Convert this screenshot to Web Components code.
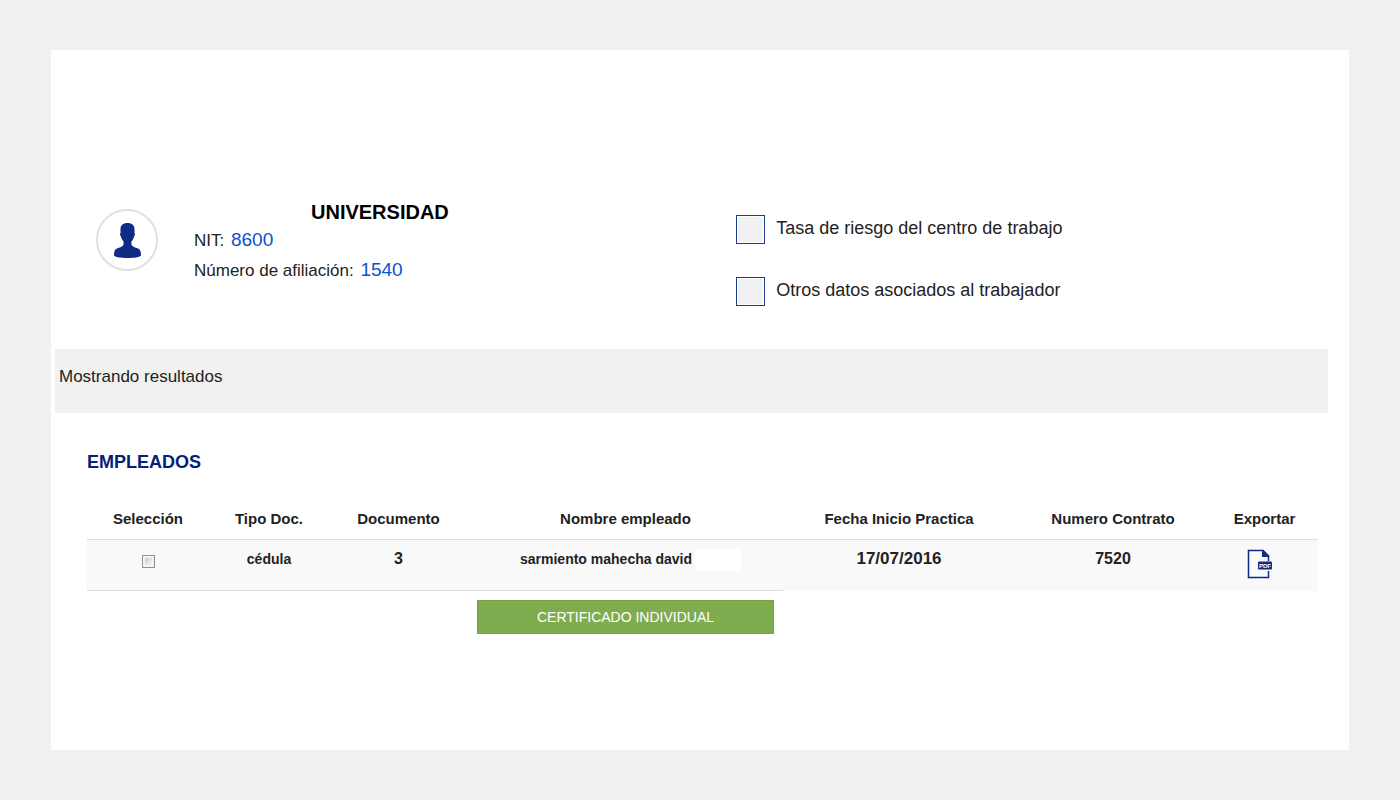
<!DOCTYPE html>
<html lang="es">
<head>
<meta charset="utf-8">
<meta name="viewport" content="width=device-width, initial-scale=1">
<title>Empleados</title>
<style>
  body {
    margin: 0;
    background: #f1f1f1;
    color: #222;
    font-family: "Liberation Sans", Arial, sans-serif;
  }
</style>
</head>
<body>

<employee-page>
  <company-info slot="company" name="UNIVERSIDAD" nit="8600" affiliation="1540"></company-info>
  <check-option slot="options">Tasa de riesgo del centro de trabajo</check-option>
  <check-option slot="options">Otros datos asociados al trabajador</check-option>
  <results-bar slot="results">Mostrando resultados</results-bar>
  <employee-table slot="table"></employee-table>
</employee-page>

<template id="employee-page-template">
  <style>
    :host {
      display: block;
      margin: 50px 51px;
      min-height: calc(100vh - 100px);
      background: #fff;
    }

    header {
      display: grid;
      grid-template-columns: 53% 1fr;
      padding: 149px 45px 43px;
    }

    .options {
      display: flex;
      flex-direction: column;
      gap: 33px;
      padding-top: 16px;
    }
  </style>

  <header>
    <slot name="company"></slot>
    <div class="options"><slot name="options"></slot></div>
  </header>
  <slot name="results"></slot>
  <slot name="table"></slot>
</template>

<template id="company-info-template">
  <style>
    :host {
      display: flex;
      gap: 36px;
    }

    user-avatar {
      margin-top: 10px;
    }

    h1 {
      margin: 0;
      padding-left: 117px;
      color: #000;
      font-size: 20px;
      line-height: 27px;
    }

    p {
      margin: 0;
      font-size: 17px;
      line-height: 30px;
    }

    span {
      margin-left: 2px;
      color: #0b50d0;
      font-size: 19px;
      line-height: 20px;
    }
  </style>

  <user-avatar></user-avatar>
  <div>
    <h1></h1>
    <p>NIT: <span class="nit"></span></p>
    <p>Número de afiliación: <span class="affiliation"></span></p>
  </div>
</template>

<template id="user-avatar-template">
  <style>
    :host {
      display: flex;
      align-items: center;
      justify-content: center;
      box-sizing: border-box;
      width: 62px;
      height: 62px;
      flex: none;
      border: 2px solid #e0e0e0;
      border-radius: 50%;
    }
  </style>

  <svg width="27" height="35" viewBox="0 0 27 35" fill="#0d2c84" aria-hidden="true">
    <path d="M13.500 0C9.200 0 6.500 2.200 6.500 6V10C5.800 10.300 6 12.800 6.900 13.300C7.300 15.500 8.300 17.300 9.600 18.600V21.200C9 23.800 5.500 24.300 2.500 25.800C.8 26.700 0 28.500 0 32.500C1.500 34.300 7 35 13.500 35S25.500 34.300 27 32.500C27 28.500 26.200 26.700 24.500 25.800C21.500 24.300 18 23.800 17.400 21.200V18.600C18.700 17.300 19.700 15.500 20.100 13.300C21 12.800 21.200 10.300 20.500 10V6C20.500 2.200 17.800 0 13.500 0Z"/>
  </svg>
</template>

<template id="check-option-template">
  <style>
    :host {
      display: block;
    }

    label {
      display: flex;
      gap: 11px;
      font-size: 18px;
      line-height: 26px;
    }

    input {
      appearance: none;
      flex: none;
      width: 29px;
      height: 29px;
      margin: 0;
      border: 1px solid #1c3c8c;
      background: #f1f1f1;
      box-shadow: inset 0 0 0 1px #fff;
    }

    input:checked {
      background: #0d2c84;
    }
  </style>

  <label><input type="checkbox"><span><slot></slot></span></label>
</template>

<template id="results-bar-template">
  <style>
    :host {
      display: block;
      box-sizing: border-box;
      min-height: 64px;
      margin: 0 21px 0 4px;
      padding: 16px 4px;
      background: #f1f1f1;
      font-size: 17px;
      line-height: 24px;
    }
  </style>

  <slot></slot>
</template>

<template id="employee-table-template">
  <style>
    :host {
      display: block;
      padding: 36px 31px 36px 36px;
    }

    h2 {
      margin: 0 0 25px;
      color: #04207a;
      font-size: 18px;
      line-height: 26px;
    }

    table {
      width: 100%;
      table-layout: fixed;
      border-collapse: separate;
      border-spacing: 0;
      font-size: 15px;
      font-weight: bold;
      line-height: 20px;
      text-align: center;
    }

    th {
      padding: 9px 0 10px;
      border-bottom: 1px solid #ddd;
    }

    td {
      padding: 0;
    }

    tbody td {
      height: 42px;
      padding-top: 9px;
      background: #f9f9f9;
      vertical-align: top;
    }

    tbody td:nth-child(-n+4) {
      height: 41px;
      border-bottom: 1px solid #ddd;
    }

    .type, .name {
      font-size: 14px;
    }

    .name {
      padding-left: 10px;
    }

    .date {
      font-size: 17px;
    }

    .number {
      font-size: 16px;
    }

    .file {
      padding-right: 10px;
    }

    .blank {
      display: inline-block;
      width: 46px;
      height: 22px;
      margin-left: 3px;
      background: #fff;
      vertical-align: top;
    }

    input {
      appearance: none;
      width: 13px;
      height: 13px;
      margin: 6px 0 0;
      border: 1px solid #8e8f8f;
      background: linear-gradient(135deg, #b9bdc2, #f4f4f4 75%);
      box-shadow: inset 0 0 0 2px #f4f4f4;
      vertical-align: top;
    }

    input:checked {
      background: #0d2c84;
    }

    .export {
      padding: 0;
      border: 0;
      background: none;
      cursor: pointer;
      vertical-align: top;
    }

    svg {
      display: block;
    }

    tfoot td {
      padding: 9px;
    }

    .certificate {
      display: block;
      width: 100%;
      padding: 5px;
      border: 1px solid #73a53e;
      background: #7fac4e;
      color: #fff;
      font: 14px/22px "Liberation Sans", Arial, sans-serif;
      cursor: pointer;
    }
  </style>

  <h2>EMPLEADOS</h2>
  <table>
    <colgroup>
      <col style="width: 122px">
      <col style="width: 120px">
      <col style="width: 139px">
      <col style="width: 315px">
      <col style="width: 232px">
      <col style="width: 196px">
      <col style="width: 107px">
    </colgroup>
    <thead>
      <tr>
        <th>Selección</th>
        <th>Tipo Doc.</th>
        <th>Documento</th>
        <th>Nombre empleado</th>
        <th>Fecha Inicio Practica</th>
        <th>Numero Contrato</th>
        <th>Exportar</th>
      </tr>
    </thead>
    <tbody>
      <tr>
        <td><input type="checkbox" aria-label="Selección"></td>
        <td class="type">cédula</td>
        <td class="number">3</td>
        <td class="name">sarmiento mahecha david<span class="blank"></span></td>
        <td class="date">17/07/2016</td>
        <td class="number">7520</td>
        <td class="file">
          <button class="export" type="button" aria-label="Exportar">
            <svg width="26" height="30" viewBox="0 0 26 30">
              <path d="M16 1.500H1.500V28.500H21.500V22M21.500 12V7" fill="none" stroke="#0d2c84" stroke-width="1.500"/>
              <path d="M15 .8H16.500L22.200 6.500V8H15Z" fill="#0d2c84"/>
              <rect x="11" y="12.500" width="14" height="8" rx="1" fill="#0d2c84"/>
              <text x="18" y="18.500" fill="#fff" font-size="6" font-weight="bold" text-anchor="middle">PDF</text>
            </svg>
          </button>
        </td>
      </tr>
    </tbody>
    <tfoot>
      <tr>
        <td colspan="3"></td>
        <td><button class="certificate" type="button">CERTIFICADO INDIVIDUAL</button></td>
        <td colspan="3"></td>
      </tr>
    </tfoot>
  </table>
</template>

<script>
  (function (document, window) {

    // attaches a shadow root filled from the template named after the element
    class TemplateElement extends HTMLElement {

      connectedCallback() {
        if (!this.shadowRoot) {
          const template = document.querySelector(`#${this.localName}-template`);
          const shadowRoot = this.attachShadow({ mode: 'open' });
          shadowRoot.appendChild(document.importNode(template.content, true));
        }
      }

    }

    class CompanyInfo extends TemplateElement {

      connectedCallback() {
        super.connectedCallback();
        this.setText('h1', 'name');
        this.setText('.nit', 'nit');
        this.setText('.affiliation', 'affiliation');
      }

      setText(selector, attrName) {
        this.shadowRoot.querySelector(selector).textContent = this.getAttribute(attrName);
      }

    }

    window.customElements.define('user-avatar', class extends TemplateElement {});
    window.customElements.define('company-info', CompanyInfo);
    window.customElements.define('check-option', class extends TemplateElement {});
    window.customElements.define('results-bar', class extends TemplateElement {});
    window.customElements.define('employee-table', class extends TemplateElement {});
    window.customElements.define('employee-page', class extends TemplateElement {});

  })(document, window);
</script>

</body>
</html>
